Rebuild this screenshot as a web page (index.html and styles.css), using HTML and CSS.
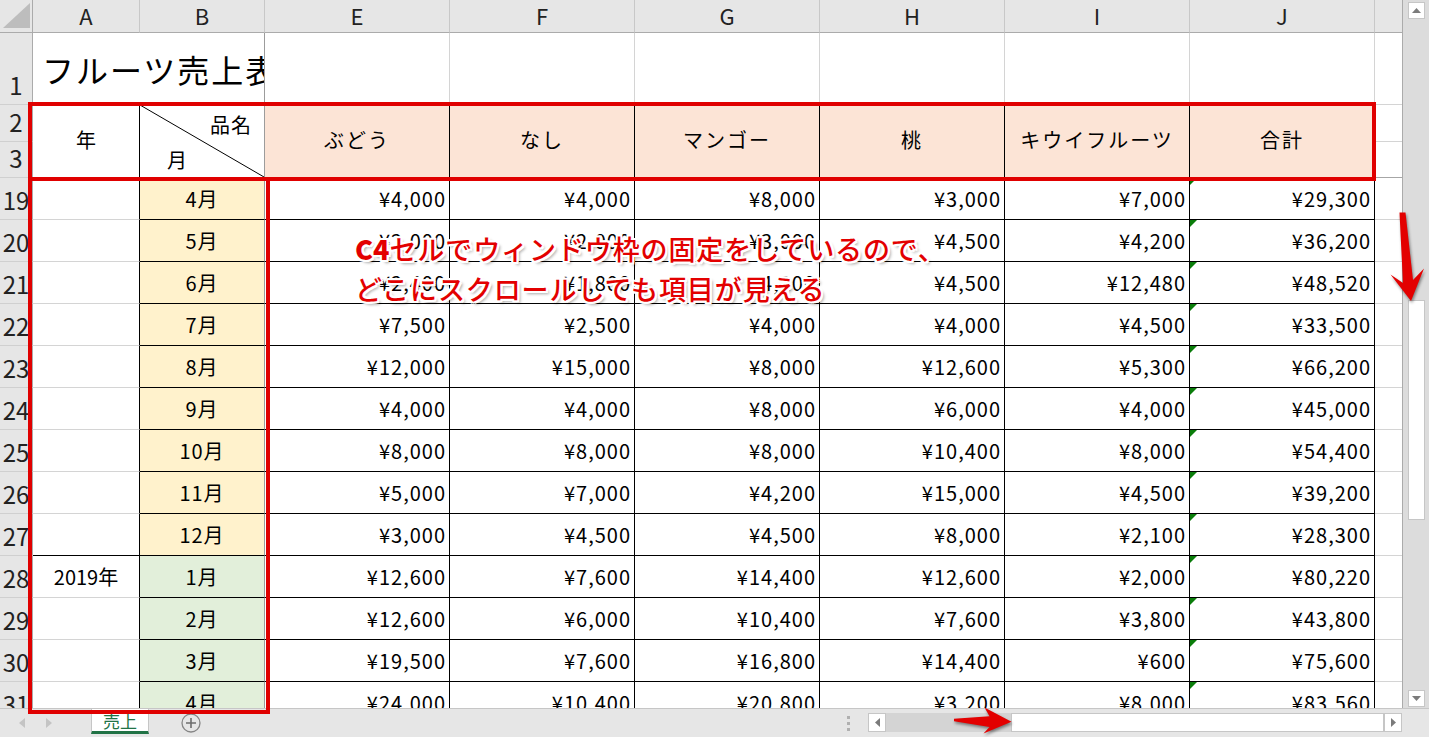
FILE: index.html
```html
<!DOCTYPE html>
<html lang="ja">
<head>
<meta charset="utf-8">
<title>フルーツ売上表</title>
<link rel="stylesheet" href="styles.css">
</head>
<body>
<div class="app">
  <div class="main">
    <div class="sheet">
      <!-- column headers -->
      <div class="c colh corner"><div class="tri"></div></div>
      <div class="c colh">A</div>
      <div class="c colh">B</div>
      <div class="c colh">E</div>
      <div class="c colh">F</div>
      <div class="c colh">G</div>
      <div class="c colh">H</div>
      <div class="c colh">I</div>
      <div class="c colh">J</div>
      <div class="c colh"></div>

      <!-- row 1 -->
      <div class="c rh">1</div>
      <div class="c title frz">フルーツ売上表</div>
      <div class="c g"></div><div class="c g"></div><div class="c g"></div>
      <div class="c g"></div><div class="c g"></div><div class="c g"></div>
      <div class="c g"></div>

      <!-- rows 2-3 -->
      <div class="c rh">2</div>
      <div class="c hdr-a">年</div>
      <div class="c hdr-b">
        <svg class="diag" viewBox="0 0 100 100" preserveAspectRatio="none"><line x1="0" y1="0" x2="100" y2="100" stroke="#000" stroke-width="1" vector-effect="non-scaling-stroke"/></svg>
        <span class="hb-top">品名</span>
        <span class="hb-bot">月</span>
      </div>
      <div class="c hdr">ぶどう</div>
      <div class="c hdr">なし</div>
      <div class="c hdr">マンゴー</div>
      <div class="c hdr">桃</div>
      <div class="c hdr">キウイフルーツ</div>
      <div class="c hdr">合計</div>
      <div class="c g"></div>
      <div class="c rh">3</div>
      <div class="c g frzb"></div>

      <!-- row 19 -->
      <div class="c rh">19</div><div class="c a"></div><div class="c mo y">4月</div>
      <div class="c d">¥4,000</div><div class="c d">¥4,000</div><div class="c d">¥8,000</div><div class="c d">¥3,000</div><div class="c d">¥7,000</div><div class="c d j">¥29,300</div><div class="c g"></div>
      <!-- row 20 -->
      <div class="c rh">20</div><div class="c a"></div><div class="c mo y">5月</div>
      <div class="c d">¥2,000</div><div class="c d">¥2,000</div><div class="c d">¥3,000</div><div class="c d">¥4,500</div><div class="c d">¥4,200</div><div class="c d j">¥36,200</div><div class="c g"></div>
      <!-- row 21 -->
      <div class="c rh">21</div><div class="c a"></div><div class="c mo y">6月</div>
      <div class="c d">¥2,400</div><div class="c d">¥1,800</div><div class="c d">¥4,200</div><div class="c d">¥4,500</div><div class="c d">¥12,480</div><div class="c d j">¥48,520</div><div class="c g"></div>
      <!-- row 22 -->
      <div class="c rh">22</div><div class="c a"></div><div class="c mo y">7月</div>
      <div class="c d">¥7,500</div><div class="c d">¥2,500</div><div class="c d">¥4,000</div><div class="c d">¥4,000</div><div class="c d">¥4,500</div><div class="c d j">¥33,500</div><div class="c g"></div>
      <!-- row 23 -->
      <div class="c rh">23</div><div class="c a"></div><div class="c mo y">8月</div>
      <div class="c d">¥12,000</div><div class="c d">¥15,000</div><div class="c d">¥8,000</div><div class="c d">¥12,600</div><div class="c d">¥5,300</div><div class="c d j">¥66,200</div><div class="c g"></div>
      <!-- row 24 -->
      <div class="c rh">24</div><div class="c a"></div><div class="c mo y">9月</div>
      <div class="c d">¥4,000</div><div class="c d">¥4,000</div><div class="c d">¥8,000</div><div class="c d">¥6,000</div><div class="c d">¥4,000</div><div class="c d j">¥45,000</div><div class="c g"></div>
      <!-- row 25 -->
      <div class="c rh">25</div><div class="c a"></div><div class="c mo y">10月</div>
      <div class="c d">¥8,000</div><div class="c d">¥8,000</div><div class="c d">¥8,000</div><div class="c d">¥10,400</div><div class="c d">¥8,000</div><div class="c d j">¥54,400</div><div class="c g"></div>
      <!-- row 26 -->
      <div class="c rh">26</div><div class="c a"></div><div class="c mo y">11月</div>
      <div class="c d">¥5,000</div><div class="c d">¥7,000</div><div class="c d">¥4,200</div><div class="c d">¥15,000</div><div class="c d">¥4,500</div><div class="c d j">¥39,200</div><div class="c g"></div>
      <!-- row 27 -->
      <div class="c rh">27</div><div class="c a bk"></div><div class="c mo y">12月</div>
      <div class="c d">¥3,000</div><div class="c d">¥4,500</div><div class="c d">¥4,500</div><div class="c d">¥8,000</div><div class="c d">¥2,100</div><div class="c d j">¥28,300</div><div class="c g"></div>
      <!-- row 28 -->
      <div class="c rh">28</div><div class="c a yr">2019年</div><div class="c mo gr">1月</div>
      <div class="c d">¥12,600</div><div class="c d">¥7,600</div><div class="c d">¥14,400</div><div class="c d">¥12,600</div><div class="c d">¥2,000</div><div class="c d j">¥80,220</div><div class="c g"></div>
      <!-- row 29 -->
      <div class="c rh">29</div><div class="c a"></div><div class="c mo gr">2月</div>
      <div class="c d">¥12,600</div><div class="c d">¥6,000</div><div class="c d">¥10,400</div><div class="c d">¥7,600</div><div class="c d">¥3,800</div><div class="c d j">¥43,800</div><div class="c g"></div>
      <!-- row 30 -->
      <div class="c rh">30</div><div class="c a"></div><div class="c mo gr">3月</div>
      <div class="c d">¥19,500</div><div class="c d">¥7,600</div><div class="c d">¥16,800</div><div class="c d">¥14,400</div><div class="c d">¥600</div><div class="c d j">¥75,600</div><div class="c g"></div>
      <!-- row 31 -->
      <div class="c rh">31</div><div class="c a"></div><div class="c mo gr">4月</div>
      <div class="c d">¥24,000</div><div class="c d">¥10,400</div><div class="c d">¥20,800</div><div class="c d">¥3,200</div><div class="c d">¥8,000</div><div class="c d j">¥83,560</div><div class="c g"></div>
    </div>

    <div class="vscroll">
      <div class="sbtn">
        <svg width="9" height="5" viewBox="0 0 9 5"><path d="M0 5 L4.5 0 L9 5 Z" fill="#7b7b7b"/></svg>
      </div>
      <div class="vtrack"><div class="vthumb"></div></div>
      <div class="sbtn">
        <svg width="9" height="5" viewBox="0 0 9 5"><path d="M0 0 L4.5 5 L9 0 Z" fill="#7b7b7b"/></svg>
      </div>
    </div>
  </div>

  <div class="bottombar">
    <div class="navs">
      <svg width="6" height="10" viewBox="0 0 6 10"><path d="M6 0 L0 5 L6 10 Z" fill="#c4c4c4"/></svg>
      <svg width="6" height="10" viewBox="0 0 6 10"><path d="M0 0 L6 5 L0 10 Z" fill="#c4c4c4"/></svg>
    </div>
    <div class="tab">売上</div>
    <div class="addsheet">
      <svg width="20" height="20" viewBox="0 0 20 20"><circle cx="10" cy="10" r="9" fill="none" stroke="#858585" stroke-width="1.3"/><path d="M10 5 V15 M5 10 H15" stroke="#6d6d6d" stroke-width="1.6"/></svg>
    </div>
    <div class="spacer"></div>
    <div class="split">
      <svg width="4" height="15" viewBox="0 0 4 15"><rect x="0" y="0" width="3" height="3" fill="#b0b0b0"/><rect x="0" y="6" width="3" height="3" fill="#b0b0b0"/><rect x="0" y="12" width="3" height="3" fill="#b0b0b0"/></svg>
    </div>
    <div class="hscroll">
      <div class="hbtn">
        <svg width="5" height="9" viewBox="0 0 5 9"><path d="M5 0 L0 4.5 L5 9 Z" fill="#7b7b7b"/></svg>
      </div>
      <div class="htrack"><div class="hthumb"></div></div>
      <div class="hbtn">
        <svg width="5" height="9" viewBox="0 0 5 9"><path d="M0 0 L5 4.5 L0 9 Z" fill="#7b7b7b"/></svg>
      </div>
    </div>
  </div>

  <!-- annotations -->
  <div class="redbox box-head"></div>
  <div class="redbox box-left"></div>
  <svg class="arrow arrow-down" width="44" height="100" viewBox="1386 205 44 100">
    <path d="M1399.5 212.5 L1405.5 212.5 L1413 280 L1424 268.5 L1411 301 L1390.5 274.5 L1403 283 Z" fill="#e30000"/>
  </svg>
  <svg class="arrow arrow-right" width="64" height="30" viewBox="952 706 64 30">
    <path d="M954 718.8 L989.5 716.3 L984.5 707.5 L1011.5 721.8 L983.5 733.5 L989.5 727 L954 721.2 Z" fill="#e30000"/>
  </svg>
  <div class="note">
    <div><b>C4</b>セルでウィンドウ枠の固定をしているので、</div>
    <div>どこにスクロールしても項目が見える</div>
  </div>
</div>
</body>
</html>
```

FILE: styles.css
```css
* { box-sizing: border-box; }
html, body { margin: 0; padding: 0; background: #fff; }
body {
  font-family: "Noto Sans CJK JP", "Noto Sans", sans-serif;
  color: #000;
}
.app {
  position: relative;
  width: 1429px;
  height: 737px;
  overflow: hidden;
}
.main {
  display: flex;
  height: 708px;
}
.sheet {
  width: 1403px;
  height: 708px;
  overflow: hidden;
  display: grid;
  grid-template-columns: 33px 107px 125px repeat(6, 185px) 28px;
  grid-template-rows: 33px 72px 37px 36px repeat(13, 42px);
  align-content: start;
  border-right: 1px solid #ababab;
}
.c {
  display: flex;
  align-items: center;
  overflow: hidden;
  white-space: nowrap;
  background: #fff;
  border-right: 1px solid #d4d4d4;
  border-bottom: 1px solid #d4d4d4;
  font-size: 20px;
}
/* headers */
.colh {
  background: #e6e6e6;
  border-right-color: #c8c8c8;
  border-bottom-color: #ababab;
  justify-content: center;
  font-size: 22px;
  color: #222;
  padding-bottom: 2px;
}
.corner {
  justify-content: flex-start;
  align-items: flex-start;
  padding: 3px 0 0 3px;
  border-right-color: #ababab;
}
.tri {
  width: 27px;
  height: 25px;
  background: #bdbdbd;
  clip-path: polygon(100% 0, 100% 100%, 0 100%);
}
.rh {
  background: #e6e6e6;
  border-right-color: #ababab;
  border-bottom-color: #d0d0d0;
  justify-content: center;
  align-items: flex-end;
  font-size: 24px;
  line-height: 1;
  padding-bottom: 7px;
  color: #222;
}
.title {
  grid-column: span 2;
  font-size: 32px;
  letter-spacing: 2px;
  padding-left: 9px;
  border-right-color: #9c9c9c;
}
.hdr-a {
  grid-row: span 2;
  justify-content: center;
  border-right-color: #000;
  border-bottom-color: #000;
  padding-bottom: 3px;
}
.hdr-b {
  grid-row: span 2;
  position: relative;
  flex-direction: column;
  align-items: stretch;
  justify-content: space-between;
  border-right-color: #9c9c9c;
  border-bottom-color: #000;
  padding: 5px 12px 3px 27px;
}
.diag {
  position: absolute;
  left: 0; top: 0;
  width: 100%; height: 100%;
}
.hb-top { align-self: flex-end; letter-spacing: 1px; }
.hb-bot { align-self: flex-start; }
.hdr {
  grid-row: span 2;
  justify-content: center;
  background: #fce4d6;
  border-right-color: #000;
  border-bottom-color: #000;
  letter-spacing: 2px;
  padding-bottom: 3px;
}
.frzb { border-bottom-color: #a6a6a6; }
/* data */
.a {
  justify-content: center;
  border-right-color: #000;
}
.a.bk { border-bottom-color: #000; }
.yr { align-items: flex-start; padding-top: 6px; }
.mo {
  justify-content: center;
  border-right-color: #9c9c9c;
  border-bottom-color: #000;
  letter-spacing: 1px;
}
.mo.y { background: #fff2cc; }
.mo.gr { background: #e2efda; }
.d {
  justify-content: flex-end;
  padding-right: 3px;
  border-right-color: #000;
  border-bottom-color: #000;
  letter-spacing: 1px;
}
.j { position: relative; }
.j::before {
  content: "";
  position: absolute;
  left: 0; top: 0;
  width: 7px; height: 7px;
  background: #0a7d0a;
  clip-path: polygon(0 0, 100% 0, 0 100%);
}
/* vertical scrollbar */
.vscroll {
  width: 26px;
  background: #dcdcdc;
  display: flex;
  flex-direction: column;
  align-items: center;
  padding: 2px 0 1px 1px;
}
.sbtn {
  width: 17px;
  height: 17px;
  background: #fff;
  border: 1px solid #c6c6c6;
  display: flex;
  align-items: center;
  justify-content: center;
  flex: none;
}
.vtrack {
  flex: 1;
  width: 17px;
  padding-top: 281px;
}
.vthumb {
  width: 17px;
  height: 220px;
  background: #fff;
  border: 1px solid #c6c6c6;
}
/* bottom bar */
.bottombar {
  height: 29px;
  background: #e6e6e6;
  border-top: 1px solid #c6c6c6;
  display: flex;
  align-items: flex-start;
}
.navs {
  width: 91px;
  display: flex;
  gap: 21px;
  padding: 9px 0 0 19px;
}
.tab {
  width: 58px;
  height: 25px;
  background: #fff;
  border-left: 1px solid #c6c6c6;
  border-right: 1px solid #c6c6c6;
  border-bottom: 3px solid #217346;
  color: #217346;
  font-size: 17px;
  line-height: 1;
  display: flex;
  justify-content: center;
  align-items: center;
  padding-top: 1px;
}
.addsheet {
  margin-left: 32px;
  padding-top: 4px;
  display: flex;
}
.spacer { flex: 1; }
.split {
  padding-top: 7px;
  margin-right: 17px;
  display: flex;
}
.hscroll {
  display: flex;
  width: 534px;
  height: 19px;
  margin-top: 4px;
  margin-right: 27px;
}
.hbtn {
  width: 18px;
  height: 19px;
  background: #fff;
  border: 1px solid #c6c6c6;
  display: flex;
  align-items: center;
  justify-content: center;
  flex: none;
}
.htrack {
  flex: 1;
  background: #d4d4d4;
  padding-left: 125px;
  display: flex;
}
.hthumb {
  flex: 1;
  background: #fff;
  border: 1px solid #c6c6c6;
}
/* annotations (overlays) */
.redbox {
  position: absolute;
  border: 4px solid #e00000;
  z-index: 5;
}
.box-head { left: 28px; top: 102px; width: 1348px; height: 79px; }
.box-left { left: 28px; top: 177px; width: 242px; height: 537px; }
.arrow {
  position: absolute;
  z-index: 6;
  filter: drop-shadow(1px 2px 1.5px rgba(0,0,0,0.45));
}
.arrow-down { left: 1386px; top: 205px; }
.arrow-right { left: 952px; top: 706px; }
.note {
  position: absolute;
  left: 355px;
  top: 229px;
  z-index: 7;
  color: #e30000;
  font-size: 27px;
  font-weight: 500;
  line-height: 40px;
  letter-spacing: 0.9px;
  white-space: nowrap;
  text-shadow:
    2px 0 0 #fff, -2px 0 0 #fff, 0 2px 0 #fff, 0 -2px 0 #fff,
    2px 2px 0 #fff, -2px -2px 0 #fff, 2px -2px 0 #fff, -2px 2px 0 #fff,
    3px 3px 3px rgba(0,0,0,0.35);
}
.note b { font-weight: 900; letter-spacing: 0; }
```
